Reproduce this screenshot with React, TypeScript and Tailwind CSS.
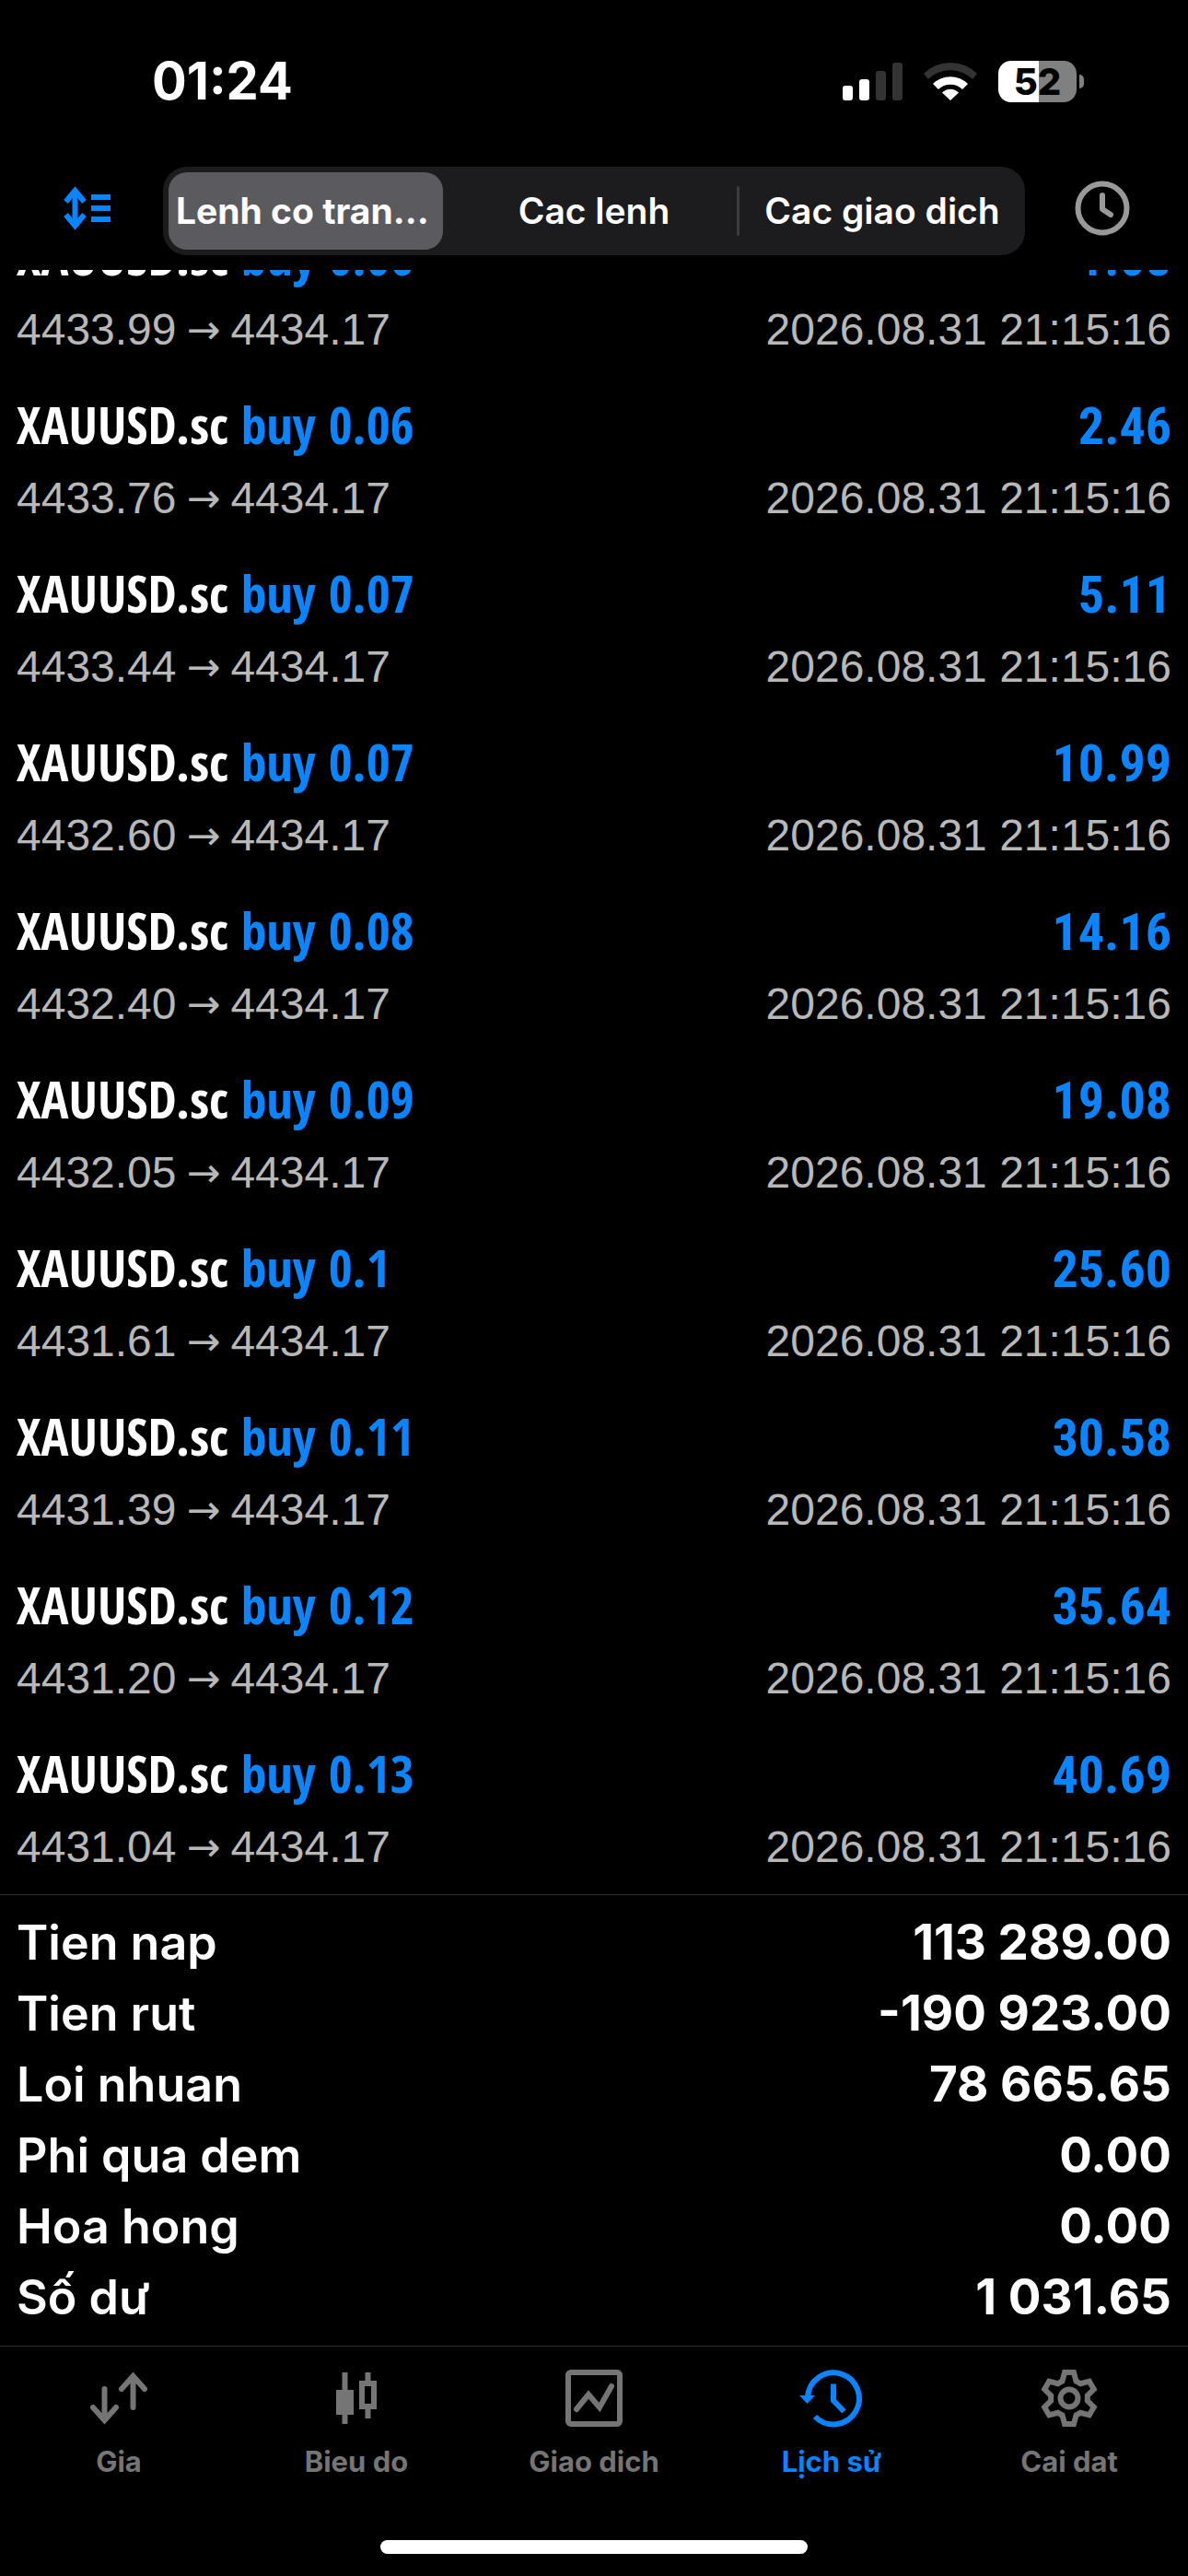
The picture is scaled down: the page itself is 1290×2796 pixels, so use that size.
import { Fragment, useState } from 'react';
import type { ReactNode } from 'react';

const DEALS = [
  { id: 1, volume: '0.06', open: '4433.99', profit: '1.08' },
  { id: 2, volume: '0.06', open: '4433.76', profit: '2.46' },
  { id: 3, volume: '0.07', open: '4433.44', profit: '5.11' },
  { id: 4, volume: '0.07', open: '4432.60', profit: '10.99' },
  { id: 5, volume: '0.08', open: '4432.40', profit: '14.16' },
  { id: 6, volume: '0.09', open: '4432.05', profit: '19.08' },
  { id: 7, volume: '0.1', open: '4431.61', profit: '25.60' },
  { id: 8, volume: '0.11', open: '4431.39', profit: '30.58' },
  { id: 9, volume: '0.12', open: '4431.20', profit: '35.64' },
  { id: 10, volume: '0.13', open: '4431.04', profit: '40.69' },
];

const SUMMARY = [
  { label: 'Tien nap', value: '113 289.00' },
  { label: 'Tien rut', value: '-190 923.00' },
  { label: 'Loi nhuan', value: '78 665.65' },
  { label: 'Phi qua dem', value: '0.00' },
  { label: 'Hoa hong', value: '0.00' },
  { label: 'Số dư', value: '1 031.65' },
];

const SEGMENTS = ['Lenh co trang thai', 'Cac lenh', 'Cac giao dich'];

// six teeth, four corners each, around (31, 31)
const GEAR_POINTS = Array.from({ length: 6 }, (_, i) => {
  const corners = [
    [20, -22],
    [28.5, -10],
    [28.5, 10],
    [20, 22],
  ];
  return corners
    .map(([r, offset]) => {
      const a = ((i * 60 - 90 + offset) * Math.PI) / 180;
      return `${(31 + r * Math.cos(a)).toFixed(2)},${(31 + r * Math.sin(a)).toFixed(2)}`;
    })
    .join(' ');
}).join(' ');

function TabIcon({ children }: { children: ReactNode }) {
  return (
    <svg
      viewBox="0 0 62 62"
      className="h-[62px] w-[62px] overflow-visible"
      fill="none"
      stroke="currentColor"
      strokeWidth="6"
      aria-hidden="true"
    >
      {children}
    </svg>
  );
}

const TABS = [
  {
    label: 'Gia',
    icon: (
      <TabIcon>
        <g strokeLinecap="round">
          <path d="M15.5 21v33M3 41l12.5 14L28 41" />
          <path d="M46.5 41V8M34 21 46.5 7 59 21" />
        </g>
      </TabIcon>
    ),
  },
  {
    label: 'Bieu do',
    icon: (
      <TabIcon>
        <path d="M18.5 3v56M43.5 3v12M43.5 41v12" />
        <path d="M9 22h19v27H9z" fill="currentColor" stroke="none" />
        <path d="M37 15h13v25H37z" />
      </TabIcon>
    ),
  },
  {
    label: 'Giao dich',
    icon: (
      <TabIcon>
        <rect x="3" y="3" width="56" height="56" rx="3" />
        <path d="M12 43 25 27l12 14 13-23" strokeLinecap="round" />
      </TabIcon>
    ),
  },
  {
    label: 'Lịch sử',
    icon: (
      <TabIcon>
        <path d="M5 30a28 28 0 1 1 8 21" />
        <path d="M-4 28h17l-8.500 9z" fill="currentColor" stroke="none" />
        <path d="M33 15.500v18l11.500 12" />
      </TabIcon>
    ),
  },
  {
    label: 'Cai dat',
    icon: (
      <TabIcon>
        <polygon points={GEAR_POINTS} />
        <circle cx="31" cy="31" r="9.500" />
      </TabIcon>
    ),
  },
];

function StatusBar() {
  return (
    <div className="flex h-44 items-center justify-between pl-[165px] pr-[113px]">
      <span className="text-[56px] font-bold leading-[64px]">01:24</span>
      <div className="flex items-center gap-[23px]">
        <svg viewBox="0 0 65 42" className="h-[42px] w-[65px]" aria-hidden="true">
          <rect x="0" y="26" width="11" height="16" rx="3" fill="#fff" />
          <rect x="18" y="19" width="11" height="23" rx="3" fill="#fff" />
          <rect x="36" y="10" width="11" height="32" rx="3" fill="#333" />
          <rect x="54" y="1" width="11" height="41" rx="3" fill="#333" />
        </svg>
        <svg viewBox="0 0 58 42" className="h-[42px] w-[58px]" aria-hidden="true">
          <path d="M0 13a41 41 0 0 1 58 0l-5 6a34 34 0 0 0-48 0z" fill="#333" />
          <path d="M10 24a27 27 0 0 1 38 0l-6 6a18.500 18.500 0 0 0-26 0z" fill="#fff" />
          <path d="M20 33.500a12.500 12.500 0 0 1 18 0L29 42z" fill="#fff" />
        </svg>
        <div className="flex items-center gap-[3px]">
          <div className="flex h-[45px] w-[85px] items-center justify-center rounded-[14px] bg-[linear-gradient(to_right,#fff_52%,#808080_52%)] text-[40px] font-extrabold leading-[45px] text-black">
            52
          </div>
          <div className="h-[15px] w-[5px] rounded-r-full bg-[#808080]" />
        </div>
      </div>
    </div>
  );
}

export default function App() {
  const [segment, setSegment] = useState(0);
  const [tab, setTab] = useState('Lịch sử');

  return (
    <main className='flex h-screen flex-col bg-black font-["Inter",sans-serif] text-white'>
      <StatusBar />

      <header className="flex shrink-0 items-center px-[63px] pb-4 pt-[5px]">
        <button type="button" aria-label="Sort" className="w-[114px] pb-[6px] text-[#0a84ff]">
          <svg viewBox="0 0 58 48" className="h-12 w-[58px]" aria-hidden="true">
            <path d="M18.500 6v36" stroke="currentColor" strokeWidth="6" />
            <path
              d="M8.500 17 18.500 5l10 12M8.500 31l10 12 10-12"
              fill="none"
              stroke="currentColor"
              strokeWidth="6"
            />
            <path d="M36 9h21v6H36zM36 21h21v6H36zM36 33h21v6H36z" fill="currentColor" />
          </svg>
        </button>

        <div className="flex h-24 min-w-0 flex-1 items-center rounded-[26px] bg-[#1c1c1e]">
          {SEGMENTS.map((name, i) => (
            <Fragment key={name}>
              {i > 0 && (
                <span
                  className={`h-[54px] w-[3px] shrink-0 rounded-full ${
                    segment === i || segment === i - 1 ? 'bg-transparent' : 'bg-[#3b3b3e]'
                  }`}
                />
              )}
              <div className="min-w-0 flex-1 px-[6px]">
                <button
                  type="button"
                  onClick={() => setSegment(i)}
                  className={`h-[84px] w-full truncate rounded-[20px] px-2 text-[39px] ${
                    segment === i ? 'bg-[#5b5a5f] font-bold' : 'font-semibold'
                  }`}
                >
                  {name}
                </button>
              </div>
            </Fragment>
          ))}
        </div>

        <button
          type="button"
          aria-label="Period"
          className="flex w-[114px] justify-end pb-[6px] text-[#999]"
        >
          <svg
            viewBox="0 0 60 60"
            className="h-[60px] w-[60px]"
            fill="none"
            stroke="currentColor"
            strokeWidth="6"
            aria-hidden="true"
          >
            <circle cx="30" cy="30" r="26.500" />
            <path d="M30 16v15l9 6" strokeLinecap="round" strokeLinejoin="round" />
          </svg>
        </button>
      </header>

      <section className="flex min-h-0 flex-1 flex-col justify-end overflow-hidden">
        {DEALS.map((deal) => (
          <div key={deal.id} className="flex shrink-0 flex-col gap-[6px] px-[18px] py-[15px]">
            <div className="flex items-baseline justify-between text-[56px] font-bold leading-[72px] text-[#0a84ff]">
              <span className='font-["Open_Sans_Condensed","Roboto_Condensed",sans-serif]'>
                <span className="text-white">XAUUSD.sc</span> buy {deal.volume}
              </span>
              <span className='font-["Roboto_Condensed",sans-serif]'>{deal.profit}</span>
            </div>
            <div className='flex justify-between font-["Liberation_Sans",Arial,sans-serif] text-[48px] leading-[72px] text-[#b8b8b8]'>
              <span className="flex items-center gap-[11px]">
                {deal.open}
                <span className='font-["DejaVu_Sans",sans-serif] text-[44px] leading-none'>→</span>
                4434.17
              </span>
              <span>2026.08.31 21:15:16</span>
            </div>
          </div>
        ))}
      </section>

      <dl className="shrink-0 border-t border-[#2e2e2e] px-[18px] pb-[14px] pt-[13px]">
        {SUMMARY.map((row) => (
          <div key={row.label} className="flex justify-between leading-[77px]">
            <dt className="text-[52px] font-semibold">{row.label}</dt>
            <dd className="text-[53px] font-bold">{row.value}</dd>
          </div>
        ))}
      </dl>

      <nav className="grid shrink-0 grid-cols-5 border-t border-[#2e2e2e] pb-[65px] pt-[25px]">
        {TABS.map((t) => (
          <button
            key={t.label}
            type="button"
            onClick={() => setTab(t.label)}
            className={`flex flex-col items-center gap-[18px] ${
              tab === t.label ? 'text-[#0a84ff]' : 'text-[#757575]'
            }`}
          >
            {t.icon}
            <span className="text-[31px] font-bold leading-10">{t.label}</span>
          </button>
        ))}
      </nav>

      <div className="mx-auto mb-6 h-[15px] w-[36%] shrink-0 rounded-full bg-white" />
    </main>
  );
}
